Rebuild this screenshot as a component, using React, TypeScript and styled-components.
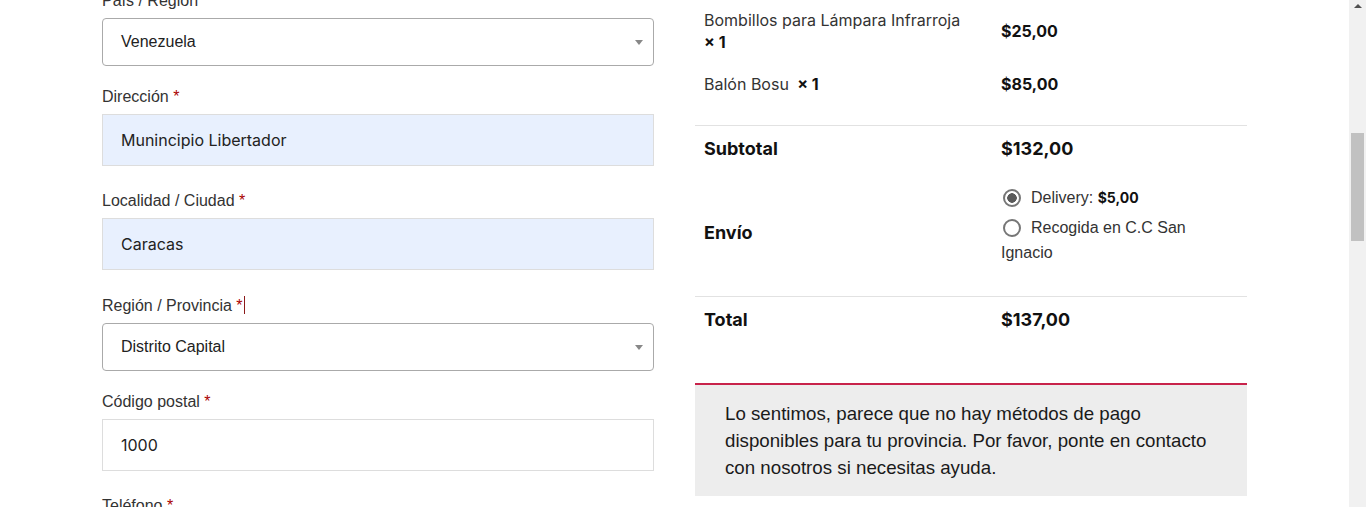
import styled, { createGlobalStyle } from "styled-components";

const GlobalStyle = createGlobalStyle`
  html, body {
    margin: 0;
    padding: 0;
    height: 507px;
    overflow: hidden;
    background: #fff;
  }
  body {
    font-family: "Liberation Sans", Arial, sans-serif;
    color: #333;
  }
`;

interface Field {
    label: string;
    value: string;
    kind: "select" | "input" | "autofill";
    gap: number;
    required?: boolean;
    caret?: boolean;
}

const fields: Field[] = [
    { label: "País / Región", value: "Venezuela", kind: "select", gap: 19 },
    { label: "Dirección", value: "Munincipio Libertador", kind: "autofill", required: true, gap: 23 },
    { label: "Localidad / Ciudad", value: "Caracas", kind: "autofill", required: true, gap: 24 },
    { label: "Región / Provincia", value: "Distrito Capital", kind: "select", required: true, caret: true, gap: 19 },
    { label: "Código postal", value: "1000", kind: "input", required: true, gap: 23 },
    { label: "Teléfono", value: "", kind: "input", required: true, gap: 23 },
];

const items = [
    { name: "Bombillos para Lámpara Infrarroja", qty: 1, price: "$25,00" },
    { name: "Balón Bosu", qty: 1, price: "$85,00" },
];

function App() {
    return (
        <>
            <GlobalStyle />
            <Screen>
                <Page>
                    <Container>
                        <LeftCol>
                            {fields.map((f) => (
                                <FieldGroup key={f.label} $gap={f.gap}>
                                    <Label>
                                        {f.label}
                                        {f.required && <Required> *</Required>}
                                        {f.caret && <Caret />}
                                    </Label>
                                    {f.kind === "select" ? (
                                        <SelectBox>
                                            <span>{f.value}</span>
                                            <Arrow />
                                        </SelectBox>
                                    ) : (
                                        <TextBox $autofill={f.kind === "autofill"}>{f.value}</TextBox>
                                    )}
                                </FieldGroup>
                            ))}
                        </LeftCol>

                        <RightCol>
                            <ItemList>
                                {items.map((it) => (
                                    <ItemRow key={it.name}>
                                        <ItemName>
                                            {it.name}{"\u00a0"}
                                            <strong> ×{"\u00a0"}{it.qty}</strong>
                                        </ItemName>
                                        <ItemPrice>{it.price}</ItemPrice>
                                    </ItemRow>
                                ))}
                            </ItemList>

                            <TotalRow>
                                <TotalLabel>Subtotal</TotalLabel>
                                <TotalValue>$132,00</TotalValue>
                            </TotalRow>
                            <ShippingRow>
                                <TotalLabel>Envío</TotalLabel>
                                <RadioList>
                                    <RadioItem>
                                        <Radio $checked />
                                        Delivery: <b>$5,00</b>
                                    </RadioItem>
                                    <RadioItem>
                                        <Radio />
                                        Recogida en C.C San Ignacio
                                    </RadioItem>
                                </RadioList>
                            </ShippingRow>
                            <TotalRow $border>
                                <TotalLabel>Total</TotalLabel>
                                <TotalValue>$137,00</TotalValue>
                            </TotalRow>

                            <Notice>
                                Lo sentimos, parece que no hay métodos de pago disponibles para tu
                                provincia. Por favor, ponte en contacto con nosotros si necesitas ayuda.
                            </Notice>
                        </RightCol>
                    </Container>
                </Page>
                <Scrollbar>
                    <ScrollArrow />
                    <ScrollThumb />
                </Scrollbar>
            </Screen>
        </>
    );
}

const Screen = styled.div`
    display: flex;
    height: 507px;
    overflow: hidden;
`;

const Page = styled.div`
    flex: 1;
    display: flex;
    justify-content: center;
`;

const Container = styled.div`
    width: 1145px;
    display: grid;
    grid-template-columns: 552px 552px;
    column-gap: 41px;
    align-items: start;
`;

const LeftCol = styled.div`
    margin-top: -11px;
`;

const FieldGroup = styled.div<{ $gap: number }>`
    margin-bottom: ${({ $gap }) => $gap}px;
`;

const Label = styled.div`
    font-size: 16px;
    line-height: 24px;
    color: #333;
    margin-bottom: 5px;
`;

const Required = styled.span`
    color: #a00;
`;

const Caret = styled.span`
    display: inline-block;
    width: 1px;
    height: 18px;
    margin-left: 1px;
    vertical-align: -3px;
    background: #8b1a1a;
`;

const SelectBox = styled.div`
    height: 48px;
    box-sizing: border-box;
    border: 1px solid #aaa;
    border-radius: 4px;
    display: flex;
    align-items: center;
    justify-content: space-between;
    padding: 0 10px 0 18px;
    font-family: "Liberation Sans", Arial, sans-serif;
    font-size: 16px;
    color: #222;
`;

const Arrow = styled.span`
    width: 0;
    height: 0;
    border-left: 4px solid transparent;
    border-right: 4px solid transparent;
    border-top: 5px solid #888;
`;

const TextBox = styled.div<{ $autofill: boolean }>`
    height: 52px;
    box-sizing: border-box;
    border: 1px solid #ddd;
    background: ${({ $autofill }) => ($autofill ? "#e8f0fe" : "#fff")};
    display: flex;
    align-items: center;
    padding: 0 18px;
    font-family: Inter, "Liberation Sans", sans-serif;
    font-size: 16px;
    color: #222;
`;

const RightCol = styled.div`
    font-family: Inter, "Liberation Sans", sans-serif;
    color: #222;
`;

const ItemList = styled.div`
    margin-top: -1px;
    padding-bottom: 20px;
    border-bottom: 1px solid #e2e2e2;
`;

const ItemRow = styled.div`
    display: grid;
    grid-template-columns: 290px 1fr;
    align-items: center;
    padding: 10px 0;
`;

const ItemName = styled.div`
    padding: 0 9px;
    font-size: 16px;
    line-height: 22px;
    color: #333;

    strong {
        color: #111;
        font-weight: 700;
    }
`;

const ItemPrice = styled.div`
    padding: 0 0 0 16px;
    font-size: 16px;
    font-weight: 700;
    color: #111;
`;

const TotalRow = styled.div<{ $border?: boolean }>`
    display: grid;
    grid-template-columns: 290px 1fr;
    align-items: center;
    padding: 12px 0;
    border-top: ${({ $border }) => ($border ? "1px solid #e2e2e2" : "none")};
`;

const ShippingRow = styled(TotalRow)`
    padding: 13px 0 15px;
`;

const TotalLabel = styled.div`
    padding: 0 9px;
    font-size: 18px;
    line-height: 22px;
    font-weight: 700;
    color: #111;
`;

const TotalValue = styled.div`
    padding: 0 0 0 16px;
    font-size: 18px;
    line-height: 22px;
    font-weight: 700;
    color: #111;
`;

const RadioList = styled.div`
    padding: 0 9px 0 16px;
    margin-bottom: 11px;
    font-family: "Liberation Sans", Arial, sans-serif;
    font-size: 16px;
    line-height: 25px;
    color: #333;
    width: 190px;
`;

const RadioItem = styled.div`
    margin-bottom: 5px;

    b {
        font-family: Inter, "Liberation Sans", sans-serif;
        font-size: 14px;
        color: #111;
    }
`;

const Radio = styled.span<{ $checked?: boolean }>`
    display: inline-block;
    box-sizing: border-box;
    width: 18px;
    height: 18px;
    margin: 0 10px 0 2px;
    vertical-align: -4px;
    border-radius: 50%;
    border: 2px solid #767676;
    background: ${({ $checked }) =>
        $checked ? "radial-gradient(circle, #5a5a5a 0 4.5px, #fff 5px)" : "#fff"};
`;

const Notice = styled.div`
    margin-top: 40px;
    border-top: 2px solid #c8234b;
    background: #ededed;
    padding: 15px 30px 15px 30px;
    font-family: "Liberation Sans", Arial, sans-serif;
    font-size: 18.72px;
    line-height: 27px;
    color: #1a1a1a;
`;

const Scrollbar = styled.div`
    width: 17px;
    flex-shrink: 0;
    background: #f1f1f1;
    display: flex;
    flex-direction: column;
    align-items: center;
`;

const ScrollArrow = styled.span`
    margin-top: 4px;
    width: 0;
    height: 0;
    border-left: 4px solid transparent;
    border-right: 4px solid transparent;
    border-bottom: 4px solid #505050;
`;

const ScrollThumb = styled.div`
    margin-top: 125px;
    width: 13px;
    height: 108px;
    background: #c1c1c1;
`;

export default App;
